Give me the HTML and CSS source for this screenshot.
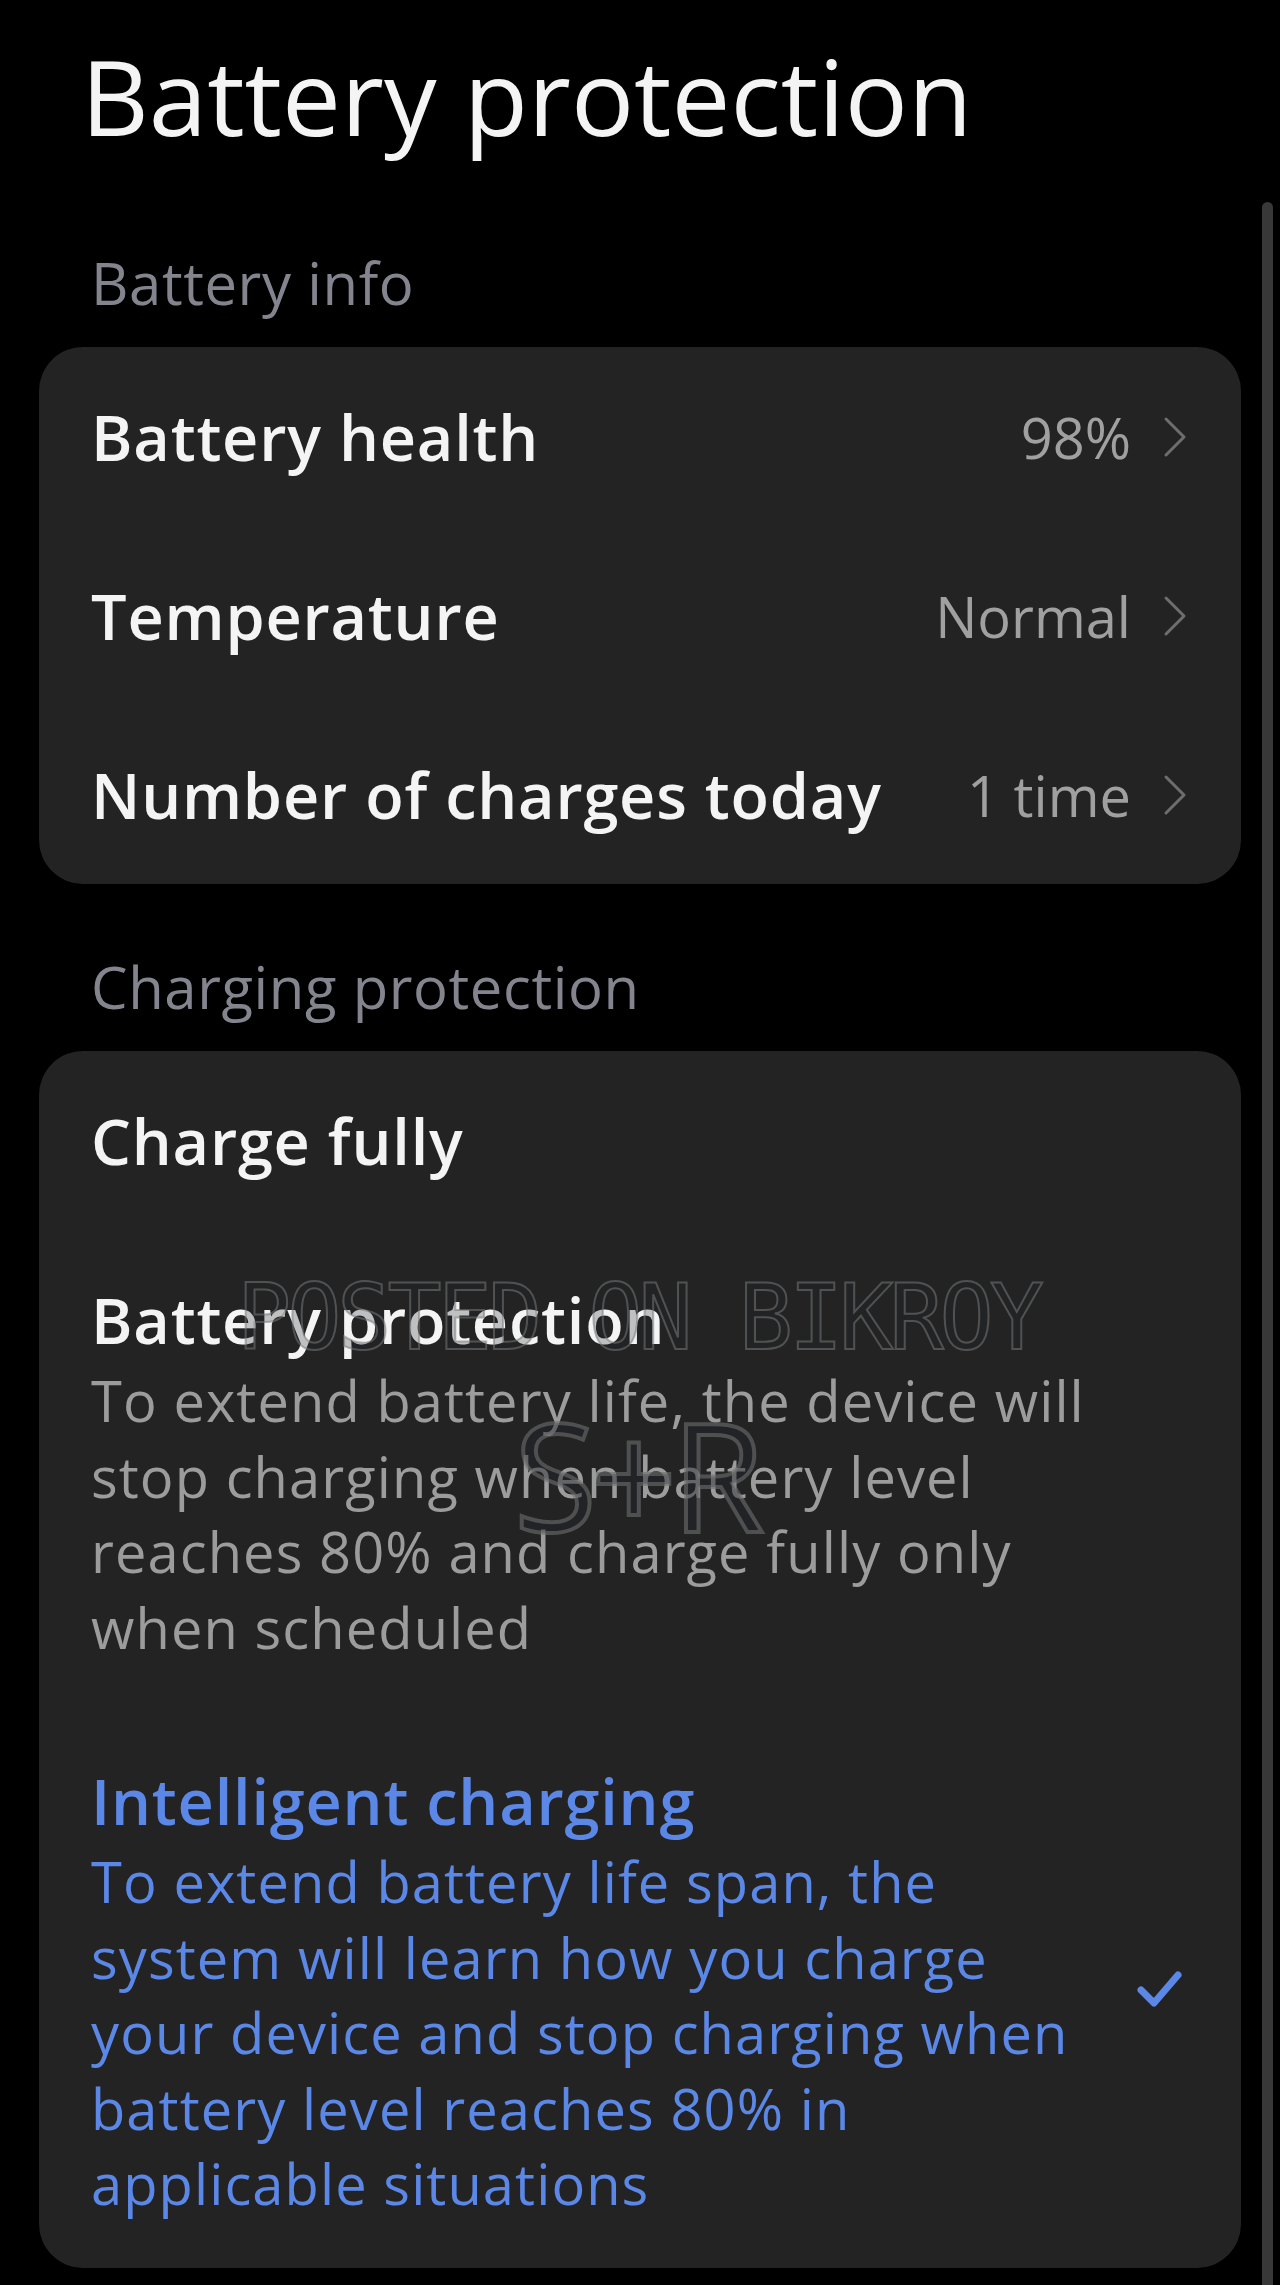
FILE: index.html
```html
<!DOCTYPE html>
<html lang="en">
<head>
    <meta charset="UTF-8">
    <meta name="viewport" content="width=device-width, initial-scale=1.0">
    <title>Battery protection</title>
    <link rel="stylesheet" href="styles.css">
</head>
<body>
    <div class="screen">
        <h1 class="page-title">Battery protection</h1>

        <!-- Battery info -->
        <div class="section-label">Battery info</div>
        <div class="card">
            <div class="row link-row">
                <span class="row-title">Battery health</span>
                <span class="row-value">98%</span>
                <svg class="chevron" width="24" height="42" viewBox="0 0 24 42"><polyline points="3,3 21,21 3,39" /></svg>
            </div>
            <div class="row link-row">
                <span class="row-title">Temperature</span>
                <span class="row-value">Normal</span>
                <svg class="chevron" width="24" height="42" viewBox="0 0 24 42"><polyline points="3,3 21,21 3,39" /></svg>
            </div>
            <div class="row link-row">
                <span class="row-title">Number of charges today</span>
                <span class="row-value">1 time</span>
                <svg class="chevron" width="24" height="42" viewBox="0 0 24 42"><polyline points="3,3 21,21 3,39" /></svg>
            </div>
        </div>

        <!-- Charging protection -->
        <div class="section-label">Charging protection</div>
        <div class="card options">
            <div class="row option">
                <div class="option-text">
                    <div class="row-title">Charge fully</div>
                </div>
            </div>
            <div class="row option">
                <div class="option-text">
                    <div class="row-title">Battery protection</div>
                    <p class="row-desc">To extend battery life, the device will stop charging when battery level reaches 80% and charge fully only when scheduled</p>
                </div>
            </div>
            <div class="row option selected">
                <div class="option-text">
                    <div class="row-title">Intelligent charging</div>
                    <p class="row-desc">To extend battery life span, the system will learn how you charge your device and stop charging when battery level reaches 80% in applicable situations</p>
                </div>
                <svg class="check" width="46" height="38" viewBox="0 0 46 38"><polyline points="5,20 18,33 42,5" /></svg>
            </div>

            <div class="watermark">
                <span class="wm-text">POSTED ON BIKROY</span>
                <span class="wm-logo">S+R</span>
            </div>
        </div>

        <div class="scrollbar"></div>
    </div>
</body>
</html>
```

FILE: styles.css
```css
/* General */
body {
    margin: 0;
    background: #000;
    font-family: 'Open Sans', 'Noto Sans', sans-serif;
    color: #f2f2f2;
}
.screen {
    position: relative;
    width: 1280px;
    min-height: 2285px;
    box-sizing: border-box;
    padding: 36px 39px 0;
}

/* Header */
.page-title {
    margin: 0 0 0 42px;
    font-size: 105px;
    font-weight: 400;
    line-height: 120px;
    color: #f4f4f4;
}
.section-label {
    margin: 97px 0 34px 52px;
    font-size: 58px;
    font-weight: 500;
    line-height: 60px;
    letter-spacing: 0.6px;
    color: #84848f;
}
.card + .section-label {
    margin-top: 73px;
}

/* Cards and rows */
.card {
    position: relative;
    background: #232323;
    border-radius: 44px;
}
.row {
    display: flex;
    align-items: center;
    padding: 46px 54px 46px 52px;
}
.row-title {
    font-size: 63px;
    font-weight: 600;
    line-height: 87px;
    letter-spacing: 0.8px;
    color: #f4f4f4;
}
.link-row .row-title {
    flex: 1;
}
.row-value {
    font-size: 56px;
    color: #a0a0a0;
}
.chevron {
    margin-left: 32px;
}
.chevron polyline {
    fill: none;
    stroke: #6e6e6e;
    stroke-width: 3;
    stroke-linecap: round;
    stroke-linejoin: round;
}

/* Charging options */
.option-text {
    flex: 1;
}
.row-desc {
    margin: 0;
    max-width: 1025px;
    font-size: 56px;
    line-height: 75.5px;
    letter-spacing: 1.1px;
    color: #9c9c9c;
}
.selected .row-title,
.selected .row-desc {
    color: #5b87e6;
}
.check {
    margin-right: 5px;
}
.check polyline {
    fill: none;
    stroke: #5b87e6;
    stroke-width: 7;
    stroke-linecap: round;
    stroke-linejoin: round;
}

/* Watermark overlay */
.watermark {
    pointer-events: none;
}
.wm-text {
    position: absolute;
    left: 198px;
    top: 222px;
    font-family: 'DejaVu Sans Mono', monospace;
    font-size: 90px;
    line-height: 90px;
    letter-spacing: -4px;
    white-space: nowrap;
    color: rgba(30, 34, 40, 0.25);
    -webkit-text-stroke: 2px rgba(120, 120, 120, 0.55);
}
.wm-logo {
    position: absolute;
    left: 475px;
    top: 347px;
    font-size: 151px;
    line-height: 151px;
    letter-spacing: -6px;
    color: rgba(30, 35, 45, 0.45);
    -webkit-text-stroke: 4px rgba(110, 110, 110, 0.6);
}

/* Scrollbar */
.scrollbar {
    position: absolute;
    top: 202px;
    right: 7px;
    width: 11px;
    height: 2100px;
    border-radius: 6px;
    background: #383838;
}
```
